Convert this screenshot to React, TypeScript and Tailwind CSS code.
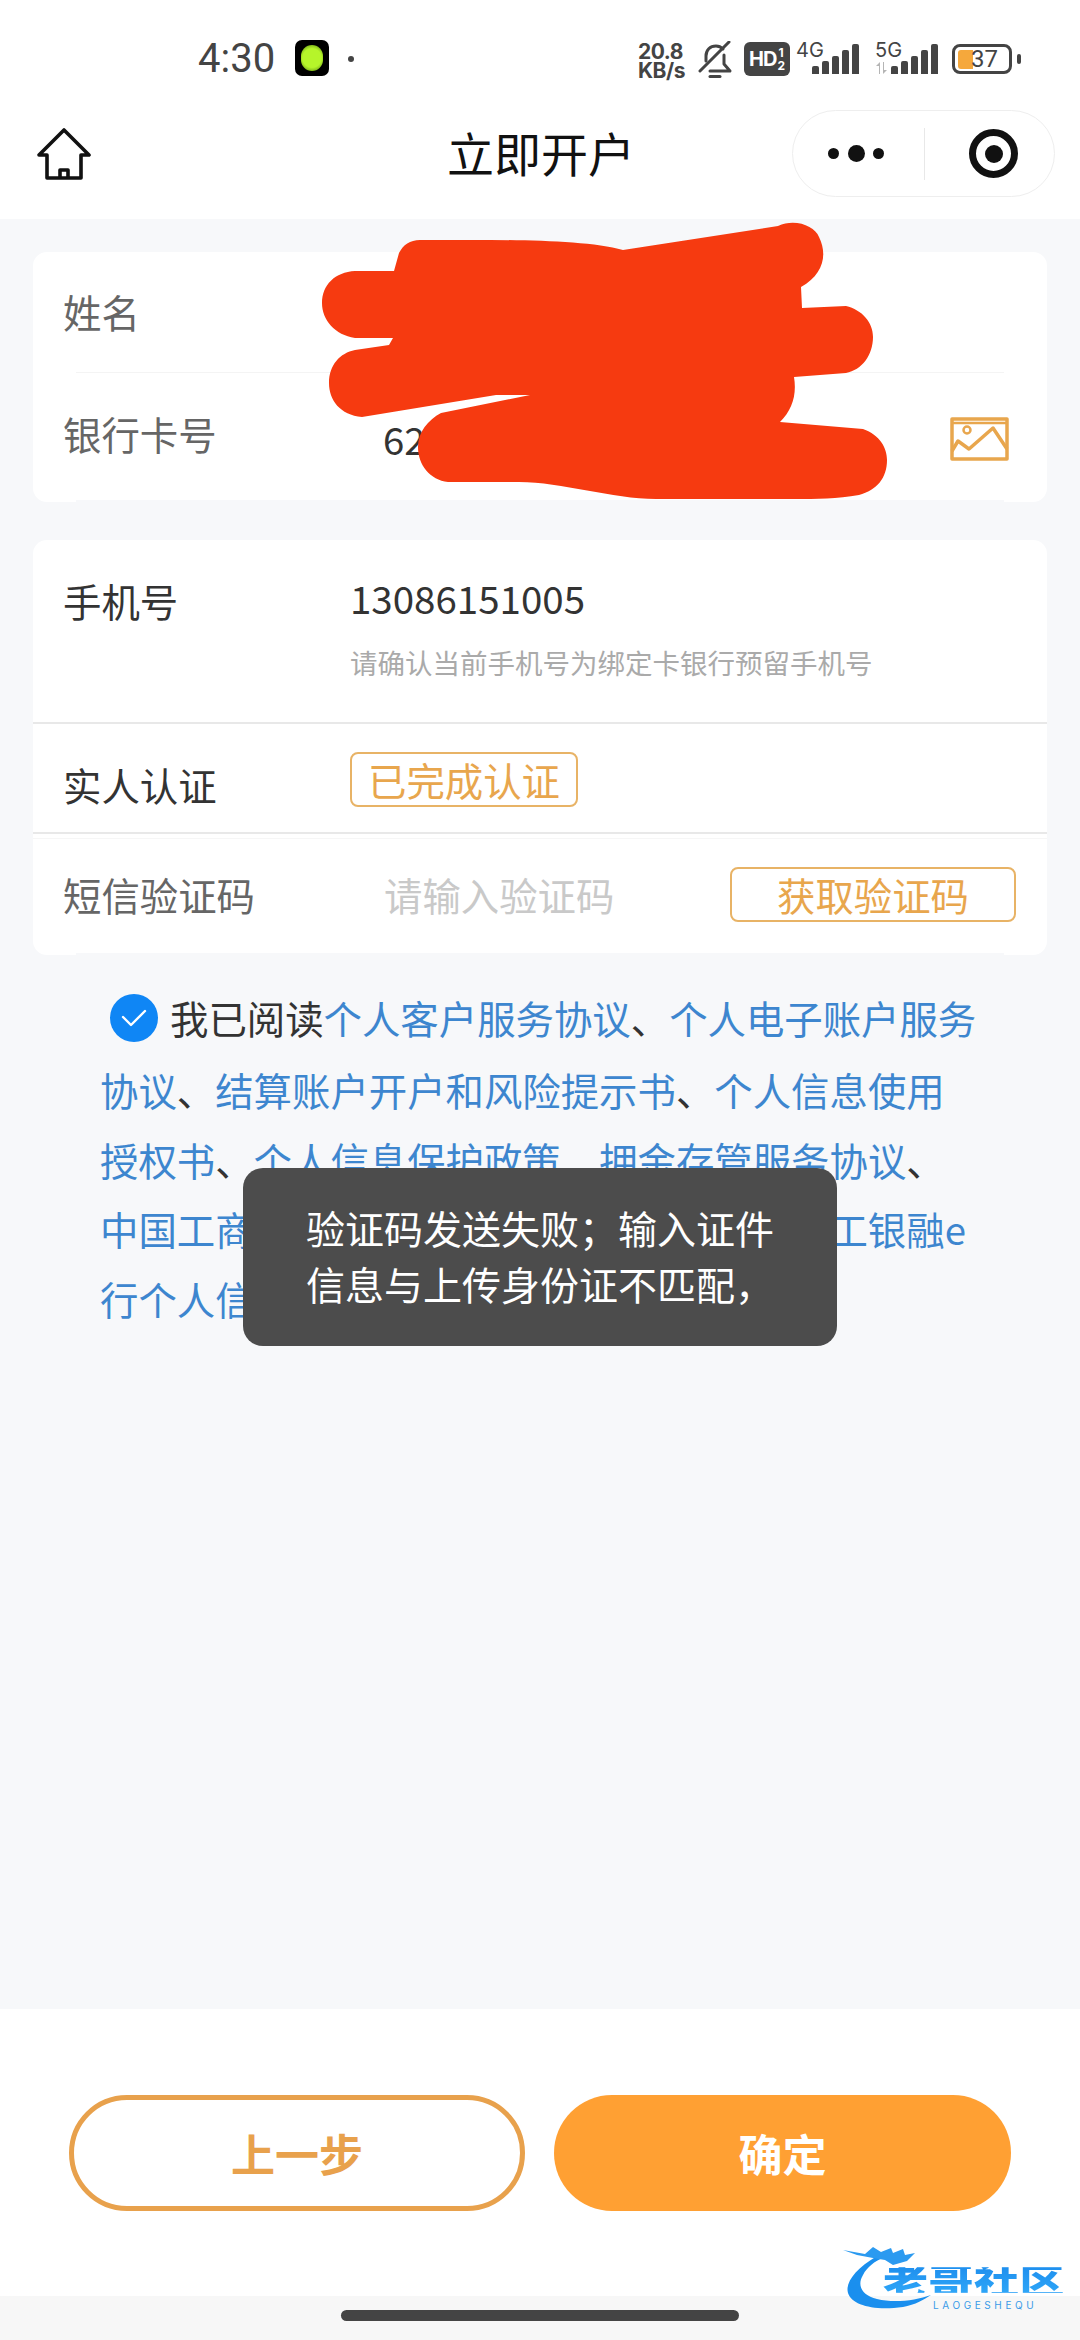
const Sep = () => <span className="text-[#333333]">、</span>;

function Bars({ className }: { className: string }) {
  const hs = [8, 13, 18, 24, 30];
  return (
    <div className={`flex items-end gap-[3px] h-[30px] ${className}`}>
      {hs.map((h, i) => (
        <div key={i} className="w-[7px] rounded-t-[2px] bg-[#444444]" style={{ height: h }} />
      ))}
    </div>
  );
}

function StatusBar() {
  return (
    <div className="h-[96px] flex items-start pt-[40px] text-[#444444]">
      <div className="ml-[198px] w-[97px] h-[37px] flex items-center text-[40px] leading-[37px] font-['Roboto',sans-serif]">4:30</div>
      <div className="w-[34px] h-[36px] rounded-[7px] bg-black flex items-center justify-center">
        <div className="w-[22px] h-[26px] rounded-full bg-[radial-gradient(circle,#b6f52a_55%,#4a7a0a_100%)]" />
      </div>
      <div className="ml-[19px] mt-[16px] w-[6px] h-[6px] rounded-full bg-[#444444]" />
      <div className="ml-[284px] w-[50px] flex flex-col items-start font-['Inter',sans-serif] font-bold text-[21px] leading-[19px] tracking-[-0.5px] mt-[2px]">
        <span>20.8</span>
        <span>KB/s</span>
      </div>
      <svg className="ml-[9px] mt-[1px]" width="36" height="38" viewBox="0 0 36 38" fill="none" stroke="#444444" strokeWidth="3" strokeLinejoin="round" strokeLinecap="round">
        <path d="M9 20V15C9 9 13 5 19 5C22 5 24 6 26 8" />
        <path d="M27 14V23L33 30H13" />
        <path d="M3 30L32 1" />
        <path d="M13 35.5H23" />
      </svg>
      <div className="ml-[11px] mt-[2px] w-[46px] h-[34px] rounded-[6px] bg-[#444444] flex items-center justify-center text-white font-['Inter',sans-serif] font-bold">
        <span className="text-[20px] leading-none tracking-[-1px]">HD</span>
        <span className="ml-[1px] flex flex-col items-center text-[12px] leading-[13px]">
          <span>1</span>
          <span>2</span>
        </span>
      </div>
      <div className="relative ml-[6px] w-[65px] h-[36px]">
        <span className="absolute left-0 top-0 text-[20px] leading-[20px] font-['Inter',sans-serif]">4G</span>
        <Bars className="absolute left-[16px] top-[4px]" />
      </div>
      <div className="relative ml-[11px] w-[66px] h-[36px]">
        <span className="absolute left-[3px] top-0 text-[20px] leading-[20px] font-['Inter',sans-serif]">5G</span>
        <svg className="absolute left-[1px] top-[22px]" width="18" height="12" viewBox="0 0 18 12" fill="#b5b5b5">
          <path d="M5 12V4H2L6 0V12ZM10 0V8H13L9 12V0Z" transform="translate(1 0)" />
        </svg>
        <Bars className="absolute left-[19px] top-[4px]" />
      </div>
      <div className="ml-[14px] mt-[4px] flex items-center">
        <div className="relative w-[60px] h-[30px] rounded-[8px] border-[3px] border-[#444444] flex items-center">
          <div className="ml-[3px] w-[15px] h-[19px] rounded-l-[3px] bg-[#f5a83c]" />
          <span className="absolute left-[16px] top-0 text-[24px] leading-[24px] font-['Roboto',sans-serif] text-[#444444]">37</span>
        </div>
        <div className="ml-[5px] w-[4px] h-[10px] rounded-[2px] bg-[#444444]" />
      </div>
    </div>
  );
}

function NavBar() {
  return (
    <div className="relative h-[123px] flex items-start">
      <svg className="ml-[36px] mt-[32px]" width="56" height="52" viewBox="0 0 56 52" fill="none" stroke="#111111" strokeWidth="3.6" strokeLinejoin="round">
        <path d="M28 2L53 27H45V50H11V27H3Z" />
        <path d="M24 50V42H32V50" />
      </svg>
      <div className="absolute left-[2px] right-0 top-[26px] text-center text-[47px] leading-[60px] text-[#111111]">立即开户</div>
      <div className="ml-auto mr-[25px] mt-[14px] w-[263px] h-[87px] rounded-full border border-[#eeeeee] flex items-center">
        <div className="ml-[35px] w-[56px] flex items-center justify-between">
          <div className="w-[11px] h-[11px] rounded-full bg-[#111111]" />
          <div className="w-[17px] h-[17px] rounded-full bg-[#111111]" />
          <div className="w-[11px] h-[11px] rounded-full bg-[#111111]" />
        </div>
        <div className="ml-[40px] w-px h-[52px] bg-[#e8e8e8]" />
        <div className="ml-[44px] w-[49px] h-[49px] rounded-full border-[7px] border-[#111111] flex items-center justify-center">
          <div className="w-[18px] h-[18px] rounded-full bg-[#111111]" />
        </div>
      </div>
    </div>
  );
}

function CardOne() {
  return (
    <div className="h-[250px] rounded-[14px] bg-white flex flex-col">
      <div className="h-[120px] pl-[30px] flex items-center text-[#666666]">姓名</div>
      <div className="h-px mx-[43px] bg-[#f4f4f4]" />
      <div className="h-[127px] pl-[30px] pr-[38px] flex items-center">
        <span className="w-[320px] text-[#666666] -mt-[6px]">银行卡号</span>
        <span className="text-[#333333] mt-[4px]">6212</span>
        <svg className="ml-auto mt-[4px]" width="59" height="44" viewBox="0 0 59 44" fill="none" stroke="#e8a64d" strokeWidth="3.5" strokeLinejoin="round">
          <rect x="2" y="2" width="55" height="40" />
          <path d="M2 6H57" strokeWidth="2.5" />
          <path d="M2 34L8 24L19 32L43 11L57 32" />
          <circle cx="17" cy="13" r="3.5" strokeWidth="2.5" />
        </svg>
      </div>
      <div className="h-[2px] mx-[43px] bg-[#f7f8fa]" />
    </div>
  );
}

function CardTwo() {
  return (
    <div className="h-[415px] rounded-[14px] bg-white flex flex-col">
      <div className="h-[182px] pl-[30px] pt-[32px] flex items-start">
        <span className="w-[287px] mt-[3px] leading-[50px] text-[#333333]">手机号</span>
        <div className="flex flex-col">
          <span className="leading-[50px] text-[38.5px] text-[#333333]">13086151005</span>
          <span className="mt-[20px] leading-[40px] text-[27.5px] text-[#aaaaaa]">请确认当前手机号为绑定卡银行预留手机号</span>
        </div>
      </div>
      <div className="h-[2px] bg-[#e8e8e8]" />
      <div className="h-[108px] pl-[30px] flex items-start">
        <span className="w-[287px] mt-[35px] leading-[50px] text-[#333333]">实人认证</span>
        <span className="mt-[28px] w-[228px] h-[55px] rounded-[8px] border-2 border-[#e8b366] flex items-center justify-center leading-none text-[#e8a64d]">已完成认证</span>
      </div>
      <div className="h-[2px] bg-[#e8e8e8]" />
      <div className="mt-[4px] h-px bg-[#f6f6f6]" />
      <div className="flex-1 pl-[30px] pr-[31px] flex items-center pb-[3px]">
        <span className="w-[321px] text-[#666666]">短信验证码</span>
        <span className="text-[#c9c9c9]">请输入验证码</span>
        <span className="ml-auto w-[286px] h-[55px] rounded-[8px] border-2 border-[#e8b366] flex items-center justify-center leading-none text-[#e8a64d]">获取验证码</span>
      </div>
      <div className="h-[2px] mx-[43px] bg-[#f7f8fa]" />
    </div>
  );
}

function Agreement() {
  return (
    <div className="mt-[25px] ml-[67px] text-[#3d86cf] whitespace-nowrap">
      <div className="h-[75px] leading-[75px] flex items-center">
        <span className="ml-[10px] mr-[12px] w-[48px] h-[48px] rounded-full bg-[#0f86f5] flex items-center justify-center">
          <svg width="26" height="20" viewBox="0 0 26 20" fill="none" stroke="white" strokeWidth="2.4" strokeLinecap="round" strokeLinejoin="round">
            <path d="M2 9L10 17L24 3" />
          </svg>
        </span>
        <span className="text-[#333333]">我已阅读</span>个人客户服务协议<Sep />个人电子账户服务
      </div>
      <p className="leading-[69.5px]">
        协议<Sep />结算账户开户和风险提示书<Sep />个人信息使用
        <br />
        授权书<Sep />个人信息保护政策<Sep />拥金存管服务协议<Sep />
        <br />
        中国工商银行电子银行个人客户服务协议<Sep />工银融e
        <br />
        行个人信息保护政策
      </p>
    </div>
  );
}

function Toast() {
  return (
    <div className="absolute left-[243px] top-[1168px] w-[594px] h-[178px] rounded-[20px] bg-[#4c4c4c] pl-[63px] pt-[31px] text-white text-[39px] leading-[56px]">
      验证码发送失败；输入证件
      <br />
      信息与上传身份证不匹配，
    </div>
  );
}

function Scribble() {
  return (
    <svg className="absolute left-0 top-0 pointer-events-none" width="1080" height="520" viewBox="0 0 1080 520">
      <path
        fill="#f63a10"
        d="M420 240C480 240 580 238 623 250L778 226C795 218 815 226 819 237C828 255 823 275 801 287L802 308L846 306C862 310 873 322 873 337C873 355 862 370 846 373L794 377C797 395 792 410 780 422L863 429C880 435 887 448 887 460C887 478 877 490 859 495C837 499 817 499 794 499H656C612 499 562 482 519 482H448C430 480 418 465 418 447C418 432 428 420 441 413L530 395H496L362 417C340 415 329 400 329 383C329 365 340 353 355 350L389 345L393 338H355C335 335 322 320 322 303C322 285 335 272 355 271H394L399 253C403 245 410 240 420 240Z"
      />
    </svg>
  );
}

function Watermark() {
  return (
    <div className="absolute left-[843px] top-[2245px] w-[222px] h-[66px]">
      <svg className="absolute left-0 top-0" width="110" height="66" viewBox="0 0 110 66" fill="none">
        <path d="M34 11C12 24 2 38 5 48C9 60 30 66 60 62C72 60 82 54 88 50C72 56 50 58 34 54C18 50 14 40 20 30C24 22 32 16 40 13Z" fill="#1a8fee" />
        <path d="M0 5L22 9L30 2L38 7L48 3L50 8L60 4L62 10L72 8L64 16L50 20L42 15L30 13L14 10Z" fill="#2b9af0" />
      </svg>
      <span className="absolute left-[40px] top-[19px] text-[45px] leading-[32px] font-black tracking-[0.5px] whitespace-nowrap scale-y-[0.8] origin-center bg-gradient-to-b from-[#1f8fee] to-[#2ea6f8] bg-clip-text text-transparent">老哥社区</span>
      <span className="absolute left-[90px] top-[54px] text-[10px] leading-[12px] tracking-[3.6px] font-['Inter',sans-serif] text-[#3a9be8]">LAOGESHEQU</span>
    </div>
  );
}

export default function App() {
  return (
    <div className="relative w-[1080px] h-[2340px] overflow-hidden flex flex-col bg-[#f7f8fa] text-[38.4px] font-['Noto_Sans_CJK_SC','Noto_Sans',sans-serif]">
      <header className="h-[219px] bg-white shrink-0">
        <StatusBar />
        <NavBar />
      </header>
      <main className="flex-1 px-[33px] pt-[33px]">
        <CardOne />
        <div className="h-[38px]" />
        <CardTwo />
        <Agreement />
      </main>
      <footer className="h-[287px] shrink-0 bg-white px-[69px] pt-[86px] flex gap-[29px]">
        <button className="w-[456px] h-[116px] rounded-full border-[5px] border-[#e8a14c] bg-white text-[44px] font-bold text-[#e8a14c]">上一步</button>
        <button className="w-[457px] h-[116px] rounded-full bg-[#ffa033] text-[44px] font-bold text-white">确定</button>
      </footer>
      <div className="h-[44px] shrink-0 bg-[#f7f7f7] flex justify-center pt-[14px]">
        <div className="w-[398px] h-[11px] rounded-full bg-[#444444]" />
      </div>
      <Scribble />
      <Toast />
      <Watermark />
    </div>
  );
}
